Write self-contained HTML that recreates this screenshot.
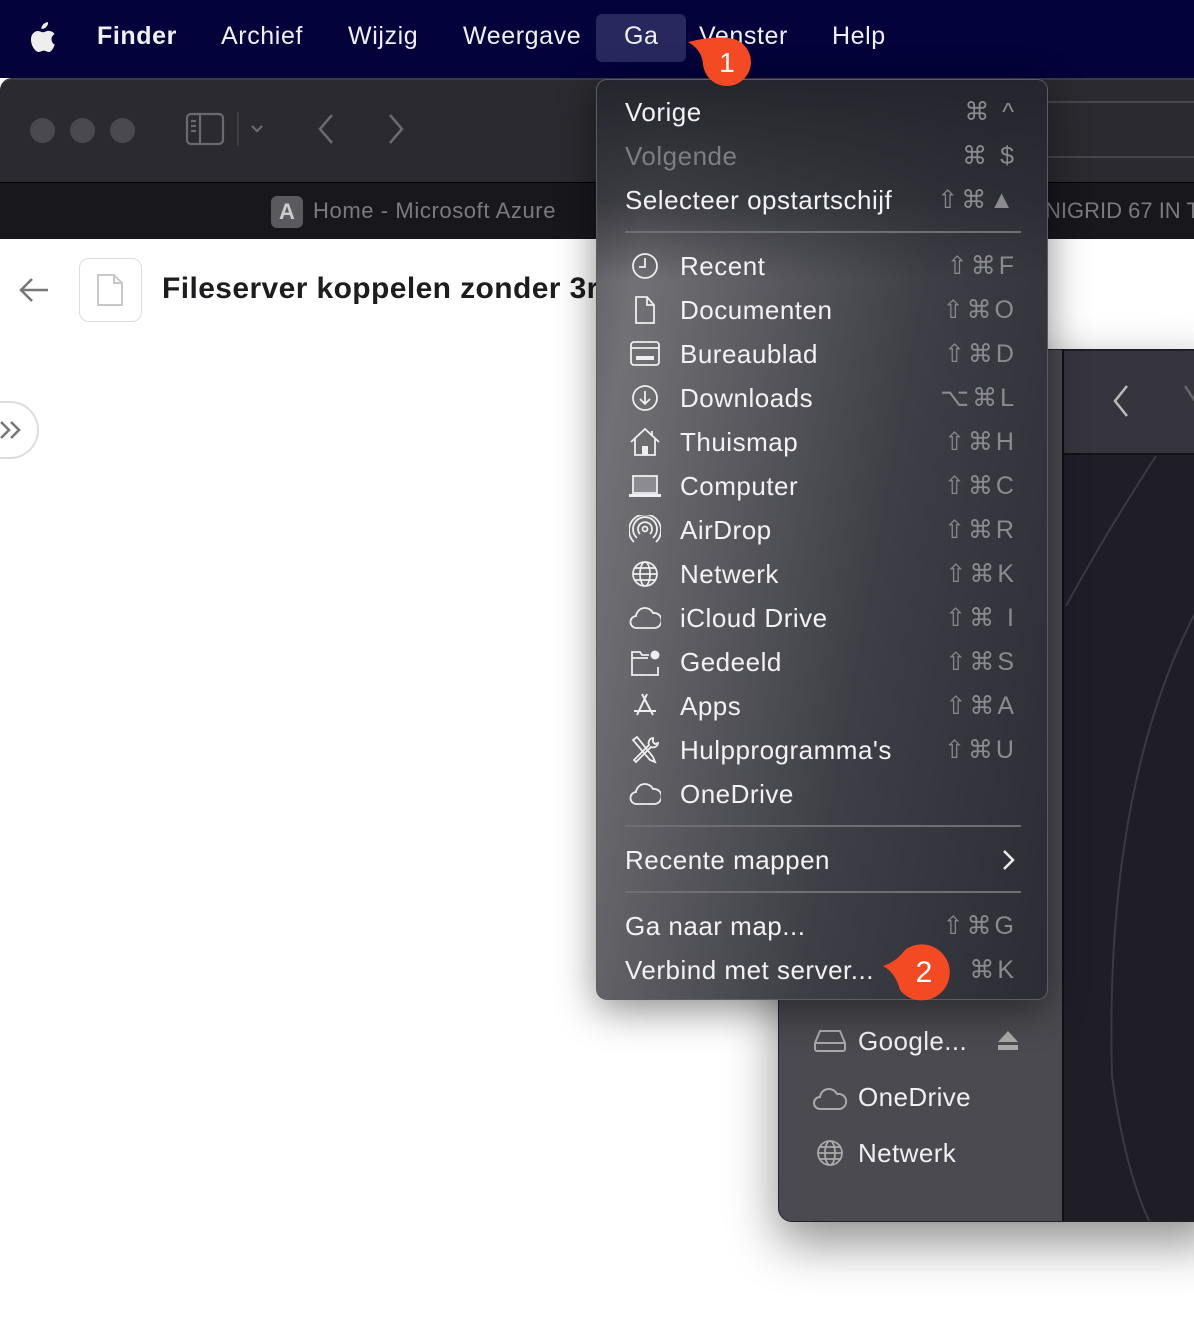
<!DOCTYPE html>
<html><head><meta charset="utf-8">
<style>
*{margin:0;padding:0;box-sizing:border-box}
body{width:1194px;height:1340px;overflow:hidden;background:#fff;font-family:"Liberation Sans",Arial,sans-serif;position:relative}
.a{position:absolute}
.mb{left:0;top:0;width:1194px;height:78px;background:#03023a}
.mbt{color:#f0f0f4;font-size:25px;top:22px;white-space:nowrap;letter-spacing:.6px}
.menu{left:596px;top:79px;width:452px;height:921px;border-radius:11px;border:1px solid #5c5c62;
background:linear-gradient(100deg,#5a5a5f 0%,#727276 12%,#58585e 35%,#3e3e46 60%,#2c2c34 100%);
box-shadow:0 10px 40px rgba(0,0,0,.45);overflow:hidden}
.menu:before{content:"";position:absolute;left:0;top:0;right:0;height:200px;background:linear-gradient(180deg,#25252d 0%,rgba(40,40,48,0.7) 60%,rgba(40,40,48,0) 100%)}
.it{position:absolute;font-size:26px;color:#f2f2f4;white-space:nowrap;line-height:30px;letter-spacing:.5px}
.sc{position:absolute;right:30px;font-size:25px;color:#8a8a90;white-space:nowrap;line-height:30px;letter-spacing:3px}
.sep{position:absolute;left:28px;width:396px;height:2px;background:#6e6e74}
.ic{position:absolute;left:32px;width:32px;height:30px}
.sbt{color:#f0f0f2;font-size:26px;white-space:nowrap;letter-spacing:.4px}
</style></head><body>

<!-- browser window -->
<div class="a" style="left:0;top:78px;width:1194px;height:105px;background:#2b2a30;border-top:2px solid #3c3b42;border-radius:12px 0 0 0"></div>
<div class="a" style="left:30px;top:118px;width:25px;height:25px;border-radius:50%;background:#4a494f"></div>
<div class="a" style="left:70px;top:118px;width:25px;height:25px;border-radius:50%;background:#4a494f"></div>
<div class="a" style="left:110px;top:118px;width:25px;height:25px;border-radius:50%;background:#4a494f"></div>
<svg class="a" style="left:185px;top:112px" width="90" height="34" viewBox="0 0 90 34" fill="none" stroke="#6a6a70" stroke-width="2.2">
<rect x="2" y="2" width="36" height="30" rx="4"/><line x1="15" y1="2" x2="15" y2="32"/>
<line x1="6" y1="9" x2="11" y2="9"/><line x1="6" y1="14" x2="11" y2="14"/><line x1="6" y1="19" x2="11" y2="19"/>
<line x1="53" y1="0" x2="53" y2="34" stroke="#444" stroke-width="1.5"/>
<path d="M67 14l5 5 5-5"/></svg>
<svg class="a" style="left:312px;top:112px" width="100" height="34" fill="none" stroke="#6a6a70" stroke-width="2.5"><path d="M20 3L8 17l12 14"/><path d="M78 3l12 14-12 14"/></svg>
<div class="a" style="left:0;top:182px;width:1194px;height:57px;background:#18171c;border-top:1px solid #000"></div>
<div class="a" style="left:271px;top:196px;width:32px;height:32px;border-radius:6px;background:#5a5a5e;color:#ccc;font-weight:bold;font-size:22px;text-align:center;line-height:32px">A</div>
<div class="a" style="left:313px;top:198px;color:#7a7a80;font-size:22px;letter-spacing:.6px">Home - Microsoft Azure</div>
<div class="a" style="left:1045px;top:198px;color:#7a7a80;font-size:22px;white-space:nowrap">NIGRID 67 IN T</div>
<div class="a" style="left:1047px;top:101px;width:147px;height:2px;background:#47464c"></div>
<div class="a" style="left:1047px;top:156px;width:147px;height:2px;background:#47464c"></div>

<!-- page -->
<svg class="a" style="left:18px;top:276px" width="32" height="28" fill="none" stroke="#777" stroke-width="2.6"><path d="M30 14H4M14 3L3 14l11 11"/></svg>
<div class="a" style="left:79px;top:258px;width:63px;height:64px;border:1.5px solid #ddd;border-radius:10px"></div>
<svg class="a" style="left:96px;top:273px" width="30" height="34" fill="none" stroke="#c8c8c8" stroke-width="2"><path d="M2 2h16l8 8v22H2z M18 2v8h8"/></svg>
<div class="a" style="left:162px;top:272px;font-size:30px;font-weight:bold;color:#1d1d1f;white-space:nowrap;letter-spacing:.4px">Fileserver koppelen zonder 3rd</div>
<div class="a" style="left:-30px;top:401px;width:69px;height:58px;border:2px solid #ddd;border-radius:29px"></div>
<svg class="a" style="left:0;top:420px" width="24" height="20" fill="none" stroke="#777" stroke-width="2.6"><path d="M1 2l8 8-8 8M11 2l8 8-8 8"/></svg>

<!-- finder window -->
<div class="a" style="left:778px;top:349px;width:440px;height:873px;border-radius:14px 0 0 14px;background:#4b4a50;border:1.5px solid #222;box-shadow:0 20px 50px rgba(0,0,0,.45)"></div>
<div class="a" style="left:1062px;top:349px;width:132px;height:872px;background:#1f1e27;border-left:2px solid #111"></div>
<div class="a" style="left:1064px;top:351px;width:130px;height:104px;background:#36353e;border-bottom:2px solid #111"></div>
<svg class="a" style="left:1064px;top:456px" width="130" height="765" fill="none" stroke="#3a3944" stroke-width="2"><path d="M92 0Q40 80 2 150"/><path d="M140 140Q40 320 48 620Q60 710 85 765"/></svg>
<svg class="a" style="left:1105px;top:384px" width="89" height="34" fill="none" stroke-width="2.5"><path d="M22 2L10 17l12 15" stroke="#bbb"/><path d="M80 2l10 15" stroke="#666"/></svg>
<svg class="a" style="left:813px;top:1029px" width="34" height="24" fill="none" stroke="#aaa" stroke-width="2"><path d="M7 2h20l5 12v6a2 2 0 0 1-2 2H4a2 2 0 0 1-2-2v-6zM2 14h30"/></svg>
<div class="a sbt" style="left:858px;top:1026px">Google...</div>
<svg class="a" style="left:997px;top:1031px" width="22" height="20" fill="#aaa"><path d="M11 0l10 11H1z"/><rect x="1" y="14" width="20" height="5"/></svg>
<svg class="a" style="left:812px;top:1085px" width="36" height="26" fill="none" stroke="#aaa" stroke-width="2"><path d="M8 24a6 6 0 0 1 0-12 9 9 0 0 1 17-3 7 7 0 0 1 3 15z"/></svg>
<div class="a sbt" style="left:858px;top:1082px">OneDrive</div>
<svg class="a" style="left:816px;top:1139px" width="28" height="28" fill="none" stroke="#aaa" stroke-width="1.8"><circle cx="14" cy="14" r="12"/><ellipse cx="14" cy="14" rx="5" ry="12"/><path d="M2 14h24M4 8h20M4 20h20"/></svg>
<div class="a sbt" style="left:858px;top:1138px">Netwerk</div>

<!-- menu bar -->
<div class="a mb"></div>
<svg class="a" style="left:29px;top:22px" width="28" height="32" viewBox="0 0 28 32" fill="#eee"><path d="M19 0c.3 2.4-.9 4.6-3 6-1.5.9-3 1-3.6.9C12 4 15 .5 19 0zM22.5 17c0 4 3 5.5 3.3 5.6-.9 2.6-3.2 7.4-6 7.4-2 0-2.6-1.2-5-1.2s-3.2 1.2-5 1.2C6.6 30 2 24 2 17.6 2 12 5.6 9 9 9c2 0 3.6 1.3 5 1.3 1.2 0 3.2-1.4 5.4-1.4 1 0 4.3.2 6.2 3.2-.3.2-3.1 1.8-3.1 4.9z"/></svg>
<div class="a mbt" style="left:97px;font-weight:bold">Finder</div>
<div class="a mbt" style="left:221px">Archief</div>
<div class="a mbt" style="left:348px">Wijzig</div>
<div class="a mbt" style="left:463px">Weergave</div>
<div class="a" style="left:596px;top:14px;width:90px;height:48px;border-radius:6px;background:#27285e"></div>
<div class="a mbt" style="left:624px">Ga</div>
<div class="a mbt" style="left:699px">Venster</div>
<div class="a mbt" style="left:832px">Help</div>

<!-- menu -->
<div class="a menu">
<div class="it" style="left:28px;top:17px">Vorige</div><div class="sc" style="top:17px">⌘ ^</div>
<div class="it" style="left:28px;top:61px;color:#7d7d84">Volgende</div><div class="sc" style="top:61px">⌘ $</div>
<div class="it" style="left:28px;top:105px">Selecteer opstartschijf</div><div class="sc" style="top:105px">⇧⌘▲</div>
<div class="sep" style="top:151px"></div>

<svg class="ic" style="top:171px" viewBox="0 0 32 30" fill="none" stroke="#eee" stroke-width="1.8"><circle cx="16" cy="15" r="12"/><path d="M16 7v9h-6"/></svg>
<div class="it" style="left:83px;top:171px">Recent</div><div class="sc" style="top:171px">⇧⌘F</div>
<svg class="ic" style="top:215px" viewBox="0 0 32 30" fill="none" stroke="#eee" stroke-width="1.8"><path d="M7 2h11l7 8v18H7zM18 2v8h7"/></svg>
<div class="it" style="left:83px;top:215px">Documenten</div><div class="sc" style="top:215px">⇧⌘O</div>
<svg class="ic" style="top:259px" viewBox="0 0 32 30" fill="none" stroke="#eee" stroke-width="1.8"><rect x="2" y="3" width="28" height="23" rx="3"/><path d="M2 9h28"/><rect x="7" y="17" width="18" height="4" fill="#eee" stroke="none"/></svg>
<div class="it" style="left:83px;top:259px">Bureaublad</div><div class="sc" style="top:259px">⇧⌘D</div>
<svg class="ic" style="top:303px" viewBox="0 0 32 30" fill="none" stroke="#eee" stroke-width="1.8"><circle cx="16" cy="15" r="12"/><path d="M16 8v13M11 16l5 5 5-5"/></svg>
<div class="it" style="left:83px;top:303px">Downloads</div><div class="sc" style="top:303px">⌥⌘L</div>
<svg class="ic" style="top:347px" viewBox="0 0 32 30" fill="none" stroke="#eee" stroke-width="1.8"><path d="M2 15L16 2l14 13M6 12v16h20V12M23 4v5"/><rect x="13" y="19" width="6" height="9" fill="#eee" stroke="none"/></svg>
<div class="it" style="left:83px;top:347px">Thuismap</div><div class="sc" style="top:347px">⇧⌘H</div>
<svg class="ic" style="top:391px" viewBox="0 0 32 30"><rect x="4" y="5" width="24" height="17" fill="#8c8c90" stroke="#eee" stroke-width="1.8"/><rect x="0" y="23" width="32" height="3" fill="#eee"/></svg>
<div class="it" style="left:83px;top:391px">Computer</div><div class="sc" style="top:391px">⇧⌘C</div>
<svg class="ic" style="top:435px" viewBox="0 0 32 30" fill="none" stroke="#eee" stroke-width="1.8"><circle cx="16" cy="14" r="2.5"/><path d="M11 19a7 7 0 1 1 10 0M8 23a12 12 0 1 1 16 0M5 27a16 16 0 1 1 22 0"/></svg>
<div class="it" style="left:83px;top:435px">AirDrop</div><div class="sc" style="top:435px">⇧⌘R</div>
<svg class="ic" style="top:479px" viewBox="0 0 32 30" fill="none" stroke="#eee" stroke-width="1.7"><circle cx="16" cy="15" r="12"/><ellipse cx="16" cy="15" rx="5" ry="12"/><path d="M4 15h24M6 9h20M6 21h20"/></svg>
<div class="it" style="left:83px;top:479px">Netwerk</div><div class="sc" style="top:479px">⇧⌘K</div>
<svg class="ic" style="top:523px" viewBox="0 0 32 30" fill="none" stroke="#eee" stroke-width="1.8"><path d="M8 25a6 6 0 0 1-1-12 9 9 0 0 1 17-3 7.5 7.5 0 0 1 2 15z"/></svg>
<div class="it" style="left:83px;top:523px">iCloud Drive</div><div class="sc" style="top:523px">⇧⌘ I</div>
<svg class="ic" style="top:567px" viewBox="0 0 32 30" fill="none" stroke="#eee" stroke-width="1.8"><path d="M20 8H13l-2-3H3v23h26v-8M3 11h16"/><circle cx="26" cy="8" r="4.5" fill="#eee" stroke="none"/></svg>
<div class="it" style="left:83px;top:567px">Gedeeld</div><div class="sc" style="top:567px">⇧⌘S</div>
<svg class="ic" style="top:611px" viewBox="0 0 32 30" fill="none" stroke="#eee" stroke-width="2"><path d="M18 3L8 24M13 3l11 21M5 20h22"/></svg>
<div class="it" style="left:83px;top:611px">Apps</div><div class="sc" style="top:611px">⇧⌘A</div>
<svg class="ic" style="top:655px" viewBox="0 0 32 30" fill="none" stroke="#eee" stroke-width="1.8"><path d="M4 5l4-3 16 20 2 5-5-2zM24 3a5 5 0 0 0-4 7L5 25l2 2 15-15a5 5 0 0 0 7-4l-3 1-2-2z"/></svg>
<div class="it" style="left:83px;top:655px">Hulpprogramma's</div><div class="sc" style="top:655px">⇧⌘U</div>
<svg class="ic" style="top:699px" viewBox="0 0 32 30" fill="none" stroke="#eee" stroke-width="1.8"><path d="M8 25a6 6 0 0 1-1-12 9 9 0 0 1 17-3 7.5 7.5 0 0 1 2 15z"/></svg>
<div class="it" style="left:83px;top:699px">OneDrive</div>

<div class="sep" style="top:745px"></div>
<div class="it" style="left:28px;top:765px">Recente mappen</div>
<svg class="a" style="left:404px;top:768px" width="16" height="24" fill="none" stroke="#eee" stroke-width="2.5"><path d="M3 3l9 9-9 9"/></svg>
<div class="sep" style="top:811px"></div>
<div class="it" style="left:28px;top:831px">Ga naar map...</div><div class="sc" style="top:831px">⇧⌘G</div>
<div class="it" style="left:28px;top:875px">Verbind met server...</div><div class="sc" style="top:875px">⌘K</div>
</div>

<!-- badges -->
<svg class="a" style="left:684px;top:36px" width="72" height="56" viewBox="684 36 72 56"><path d="M688 42Q712 36 727 38a24 24 0 1 1-24 26Q702 50 688 42z" fill="#f34a24"/><text x="727" y="72" fill="#fff" font-size="28" text-anchor="middle" font-family="Liberation Sans">1</text></svg>
<svg class="a" style="left:880px;top:940px" width="74" height="62" viewBox="880 940 74 62"><path d="M883 966Q896 962 905 950a28 28 0 1 1-5 40Q895 972 883 966z" fill="#f34a24"/><text x="924" y="982" fill="#fff" font-size="30" text-anchor="middle" font-family="Liberation Sans">2</text></svg>

</body></html>
